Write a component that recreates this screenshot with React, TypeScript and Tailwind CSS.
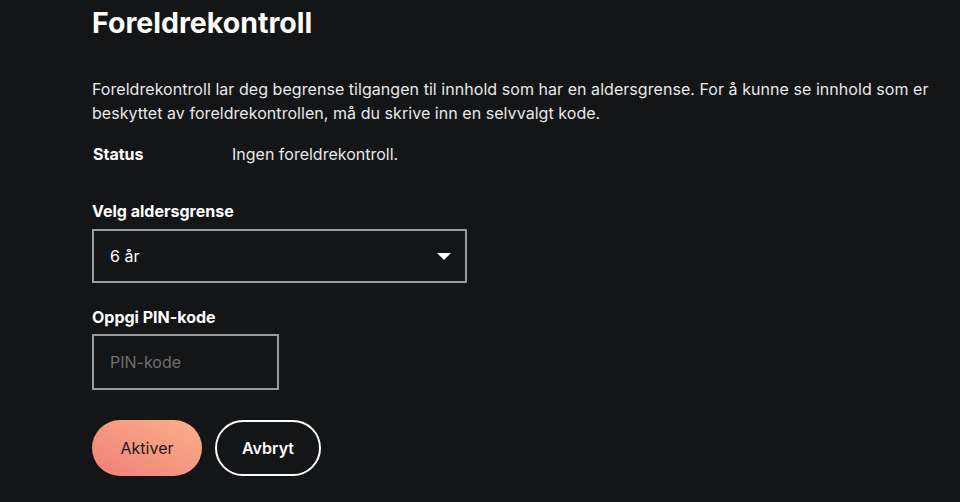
import { useState } from "react";

const App = () => {
  const [age, setAge] = useState("6");
  const [pin, setPin] = useState("");

  return (
    <div className="min-h-[502px] w-full bg-[#141517] font-['Inter',sans-serif] text-[#f2f2f2]">
      <div className="pl-[92px] pr-[20px] pt-[5px]">
        <h1 className="text-[28.5px] font-[700] leading-[36px] text-white">Foreldrekontroll</h1>
        {/* description */}
        <p className="mt-[36px] text-[16px] leading-[24px] tracking-[0.05px] text-[#e8e8e8]">
          Foreldrekontroll lar deg begrense tilgangen til innhold som har en aldersgrense. For å kunne se innhold som er
          beskyttet av foreldrekontrollen, må du skrive inn en selvvalgt kode.
        </p>
        {/* status */}
        <div className="mt-[17px] flex text-[16px] leading-[24px]">
          <span className="w-[140px] pl-[1px] font-[700] text-white">Status</span>
          <span className="text-[#e8e8e8]">Ingen foreldrekontroll.</span>
        </div>
        {/* age select */}
        <label className="mt-[33px] block text-[16px] font-[700] leading-[24px] text-white">Velg aldersgrense</label>
        <div className="relative mt-[6px] w-[375px]">
          <select
            value={age}
            onChange={(e) => setAge(e.target.value)}
            className="h-[54px] w-full appearance-none border-2 border-[#9a9a9a] bg-[#141517] pl-[16px] text-[16px] text-white focus:outline-none"
          >
            <option value="6">6 år</option>
            <option value="9">9 år</option>
            <option value="12">12 år</option>
            <option value="15">15 år</option>
            <option value="18">18 år</option>
          </select>
          <svg className="pointer-events-none absolute right-[16px] top-[24px]" width="14" height="7" viewBox="0 0 14 7">
            <path d="M0 0 L14 0 L7 7 Z" fill="#ffffff" />
          </svg>
        </div>
        {/* pin */}
        <label className="mt-[22px] block text-[16px] font-[700] leading-[24px] text-white">Oppgi PIN-kode</label>
        <input
          value={pin}
          onChange={(e) => setPin(e.target.value)}
          placeholder="PIN-kode"
          className="mt-[5px] block h-[56px] w-[187px] border-2 border-[#9a9a9a] bg-[#141517] px-[16px] text-[16px] text-white placeholder:text-[#6f6f6f] focus:outline-none"
        />
        {/* buttons */}
        <div className="mt-[30px] flex gap-[13px]">
          <button className="h-[56px] w-[110px] rounded-full bg-gradient-to-tr from-[#f07f7b] to-[#f9b088] text-[16px] font-[400] text-[#1a1a1a]">
            Aktiver
          </button>
          <button className="h-[56px] w-[106px] rounded-full border-2 border-white text-[16px] font-[600] text-white">
            Avbryt
          </button>
        </div>
      </div>
    </div>
  );
};

export default App;
